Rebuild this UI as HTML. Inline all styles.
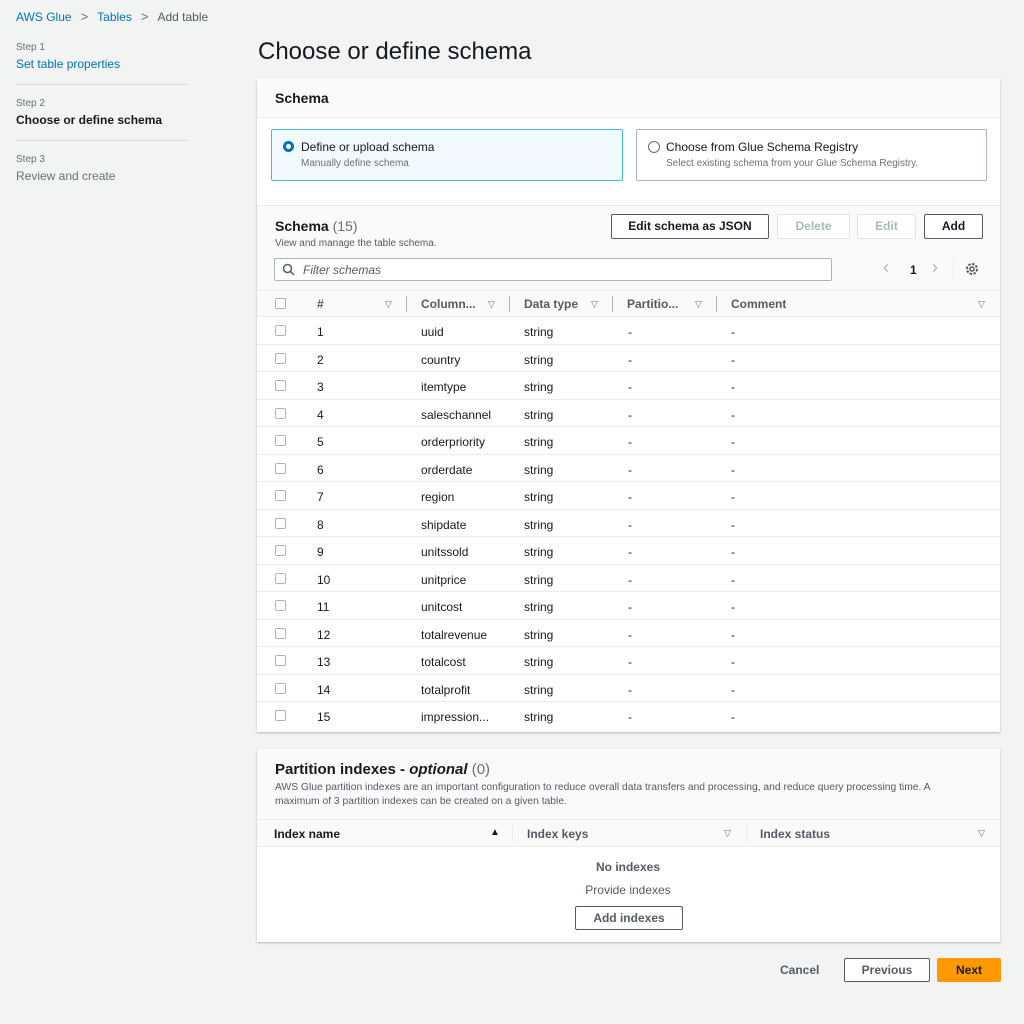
<!DOCTYPE html>
<html><head><meta charset="utf-8"><style>
*{box-sizing:border-box;margin:0;padding:0}
body{width:1024px;height:1024px;background:#f2f3f3;font-family:"Liberation Sans",sans-serif;color:#16191f;position:relative;overflow:hidden;font-size:12px}
.a{position:absolute;white-space:nowrap}
.link{color:#0073bb}
.b{font-weight:bold}
.panel{position:absolute;background:#fff;box-shadow:0 1px 2px rgba(0,0,0,.25)}
.btn{position:absolute;border:1px solid #545b64;border-radius:2px;background:#fff;font-weight:bold;font-size:12px;text-align:center;color:#545b64}
.dis{border-color:#e0e2e4;color:#aab7b8}
.cb{position:absolute;width:11px;height:11px;border:1px solid #aab7b8;border-radius:2px;background:#fff}
.row{position:absolute;left:257px;width:743px;height:27.5px;border-bottom:1px solid #eaeded}
.row span{position:absolute;top:8px;font-size:12px}
.tri{position:absolute;font-size:9px;color:#687078}
.sep{position:absolute;width:1px;background:#aab7b8}
</style></head><body>
<div class="a" style="left:16px;top:9px;font-size:12px"><span class="link">AWS Glue</span><span style="color:#687078;margin:0 9px;font-size:13px">&gt;</span><span class="link">Tables</span><span style="color:#687078;margin:0 9px;font-size:13px">&gt;</span><span style="color:#545b64">Add table</span></div>

<div class="a" style="left:16px;top:42px;font-size:10px;color:#687078">Step 1</div>
<div class="a link" style="left:16px;top:57px;font-size:12px">Set table properties</div>
<div class="a" style="left:16px;top:84px;width:172px;height:1px;background:#d5dbdb"></div>
<div class="a" style="left:16px;top:98px;font-size:10px;color:#687078">Step 2</div>
<div class="a b" style="left:16px;top:113px;font-size:12px">Choose or define schema</div>
<div class="a" style="left:16px;top:140px;width:172px;height:1px;background:#d5dbdb"></div>
<div class="a" style="left:16px;top:154px;font-size:10px;color:#687078">Step 3</div>
<div class="a" style="left:16px;top:169px;font-size:12px;color:#687078">Review and create</div>

<div class="a" style="left:258px;top:38px;font-size:24px">Choose or define schema</div>

<div class="panel" style="left:257px;top:78px;width:743px;height:654px"></div>
<div class="a" style="left:257px;top:78px;width:743px;height:40px;background:#fafafa;border-bottom:1px solid #eaeded"></div>
<div class="a b" style="left:275px;top:90px;font-size:14px">Schema</div>

<div class="a" style="left:271px;top:129px;width:352px;height:52px;border:1px solid #44b9d6;background:#f1faff;border-radius:2px"></div>
<div class="a" style="left:283px;top:141px;width:11px;height:11px;border-radius:50%;border:3px solid #0073bb;background:#fff"></div>
<div class="a" style="left:301px;top:140px;font-size:12px">Define or upload schema</div>
<div class="a" style="left:301px;top:158px;font-size:10px;color:#687078">Manually define schema</div>
<div class="a" style="left:636px;top:129px;width:351px;height:52px;border:1px solid #aab7b8;border-radius:2px"></div>
<div class="a" style="left:648px;top:141px;width:12px;height:12px;border-radius:50%;border:1px solid #687078"></div>
<div class="a" style="left:666px;top:140px;font-size:12px">Choose from Glue Schema Registry</div>
<div class="a" style="left:666px;top:158px;font-size:10px;color:#687078">Select existing schema from your Glue Schema Registry.</div>

<div class="a" style="left:257px;top:205px;width:743px;height:86px;background:#fafafa;border-top:1px solid #eaeded;border-bottom:1px solid #eaeded"></div>
<div class="a" style="left:275px;top:218px;font-size:14px"><span class="b">Schema</span> <span style="color:#687078">(15)</span></div>
<div class="a" style="left:275px;top:238px;font-size:10px;color:#545b64">View and manage the table schema.</div>
<div class="btn" style="left:611px;top:214px;width:158px;height:25px;line-height:23px;color:#16191f">Edit schema as JSON</div>
<div class="btn dis" style="left:777px;top:214px;width:73px;height:25px;line-height:23px">Delete</div>
<div class="btn dis" style="left:857px;top:214px;width:59px;height:25px;line-height:23px">Edit</div>
<div class="btn" style="left:924px;top:214px;width:59px;height:25px;line-height:23px;color:#16191f">Add</div>
<div class="a" style="left:274px;top:258px;width:558px;height:23px;border:1px solid #aab7b8;border-radius:2px;background:#fff"></div>
<svg class="a" style="left:282px;top:263px" width="13" height="13"><circle cx="5.5" cy="5.5" r="4" fill="none" stroke="#545b64" stroke-width="1.5"/><path d="M8.5 8.5L12 12" stroke="#545b64" stroke-width="1.5"/></svg>
<div class="a" style="left:303px;top:263px;font-size:12px;font-style:italic;color:#545b64">Filter schemas</div>
<div class="a" style="left:883px;top:257px;font-size:18px;color:#aab7b8">&lsaquo;</div>
<div class="a b" style="left:910px;top:263px;font-size:12px">1</div>
<div class="a" style="left:932px;top:257px;font-size:18px;color:#aab7b8">&rsaquo;</div>
<div class="sep" style="left:953px;top:258px;height:22px;background:#eaeded"></div>
<svg class="a" style="left:965px;top:262px" width="14" height="14"><circle cx="7" cy="7" r="5" fill="none" stroke="#545b64" stroke-width="2" stroke-dasharray="2.5 1.4"/><circle cx="7" cy="7" r="2" fill="none" stroke="#545b64" stroke-width="1.5"/></svg>

<div class="a" style="left:257px;top:291px;width:743px;height:26px;background:#fafafa;border-bottom:1px solid #eaeded"></div>
<div class="cb" style="left:275px;top:298px"></div>
<div class="a b" style="left:317px;top:297px;color:#545b64">#</div><div class="tri" style="left:385px;top:299px">&#9661;</div><div class="sep" style="left:406px;top:296px;height:16px"></div>
<div class="a b" style="left:421px;top:297px;color:#545b64">Column...</div><div class="tri" style="left:488px;top:299px">&#9661;</div><div class="sep" style="left:509px;top:296px;height:16px"></div>
<div class="a b" style="left:524px;top:297px;color:#545b64">Data type</div><div class="tri" style="left:591px;top:299px">&#9661;</div><div class="sep" style="left:612px;top:296px;height:16px"></div>
<div class="a b" style="left:627px;top:297px;color:#545b64">Partitio...</div><div class="tri" style="left:695px;top:299px">&#9661;</div><div class="sep" style="left:716px;top:296px;height:16px"></div>
<div class="a b" style="left:731px;top:297px;color:#545b64">Comment</div><div class="tri" style="left:978px;top:299px">&#9661;</div>

<div class="row" style="top:317px"><div class="cb" style="left:18px;top:8px"></div><span style="left:60px">1</span><span style="left:164px">uuid</span><span style="left:267px">string</span><span style="left:371px">-</span><span style="left:474px">-</span></div>
<div class="row" style="top:344.5px"><div class="cb" style="left:18px;top:8px"></div><span style="left:60px">2</span><span style="left:164px">country</span><span style="left:267px">string</span><span style="left:371px">-</span><span style="left:474px">-</span></div>
<div class="row" style="top:372px"><div class="cb" style="left:18px;top:8px"></div><span style="left:60px">3</span><span style="left:164px">itemtype</span><span style="left:267px">string</span><span style="left:371px">-</span><span style="left:474px">-</span></div>
<div class="row" style="top:399.5px"><div class="cb" style="left:18px;top:8px"></div><span style="left:60px">4</span><span style="left:164px">saleschannel</span><span style="left:267px">string</span><span style="left:371px">-</span><span style="left:474px">-</span></div>
<div class="row" style="top:427px"><div class="cb" style="left:18px;top:8px"></div><span style="left:60px">5</span><span style="left:164px">orderpriority</span><span style="left:267px">string</span><span style="left:371px">-</span><span style="left:474px">-</span></div>
<div class="row" style="top:454.5px"><div class="cb" style="left:18px;top:8px"></div><span style="left:60px">6</span><span style="left:164px">orderdate</span><span style="left:267px">string</span><span style="left:371px">-</span><span style="left:474px">-</span></div>
<div class="row" style="top:482px"><div class="cb" style="left:18px;top:8px"></div><span style="left:60px">7</span><span style="left:164px">region</span><span style="left:267px">string</span><span style="left:371px">-</span><span style="left:474px">-</span></div>
<div class="row" style="top:509.5px"><div class="cb" style="left:18px;top:8px"></div><span style="left:60px">8</span><span style="left:164px">shipdate</span><span style="left:267px">string</span><span style="left:371px">-</span><span style="left:474px">-</span></div>
<div class="row" style="top:537px"><div class="cb" style="left:18px;top:8px"></div><span style="left:60px">9</span><span style="left:164px">unitssold</span><span style="left:267px">string</span><span style="left:371px">-</span><span style="left:474px">-</span></div>
<div class="row" style="top:564.5px"><div class="cb" style="left:18px;top:8px"></div><span style="left:60px">10</span><span style="left:164px">unitprice</span><span style="left:267px">string</span><span style="left:371px">-</span><span style="left:474px">-</span></div>
<div class="row" style="top:592px"><div class="cb" style="left:18px;top:8px"></div><span style="left:60px">11</span><span style="left:164px">unitcost</span><span style="left:267px">string</span><span style="left:371px">-</span><span style="left:474px">-</span></div>
<div class="row" style="top:619.5px"><div class="cb" style="left:18px;top:8px"></div><span style="left:60px">12</span><span style="left:164px">totalrevenue</span><span style="left:267px">string</span><span style="left:371px">-</span><span style="left:474px">-</span></div>
<div class="row" style="top:647px"><div class="cb" style="left:18px;top:8px"></div><span style="left:60px">13</span><span style="left:164px">totalcost</span><span style="left:267px">string</span><span style="left:371px">-</span><span style="left:474px">-</span></div>
<div class="row" style="top:674.5px"><div class="cb" style="left:18px;top:8px"></div><span style="left:60px">14</span><span style="left:164px">totalprofit</span><span style="left:267px">string</span><span style="left:371px">-</span><span style="left:474px">-</span></div>
<div class="row" style="top:702px;border-bottom:none"><div class="cb" style="left:18px;top:8px"></div><span style="left:60px">15</span><span style="left:164px">impression...</span><span style="left:267px">string</span><span style="left:371px">-</span><span style="left:474px">-</span></div>

<div class="panel" style="left:257px;top:749px;width:743px;height:193px"></div>
<div class="a" style="left:257px;top:749px;width:743px;height:71px;background:#fafafa;border-bottom:1px solid #eaeded"></div>
<div class="a" style="left:275px;top:761px;font-size:15px"><span class="b">Partition indexes - <i>optional</i></span> <span style="color:#687078">(0)</span></div>
<div class="a" style="left:275px;top:781px;font-size:10.3px;color:#545b64;line-height:14px">AWS Glue partition indexes are an important configuration to reduce overall data transfers and processing, and reduce query processing time. A<br>maximum of 3 partition indexes can be created on a given table.</div>
<div class="a" style="left:257px;top:820px;width:743px;height:27px;background:#fafafa;border-bottom:1px solid #eaeded"></div>
<div class="a b" style="left:274px;top:827px">Index name</div><div class="a" style="left:490px;top:827px;font-size:10px">&#9650;</div><div class="sep" style="left:512px;top:825px;height:17px;background:#eaeded"></div>
<div class="a b" style="left:527px;top:827px;color:#545b64">Index keys</div><div class="tri" style="left:724px;top:828px">&#9661;</div><div class="sep" style="left:746px;top:825px;height:17px;background:#eaeded"></div>
<div class="a b" style="left:760px;top:827px;color:#545b64">Index status</div><div class="tri" style="left:978px;top:828px">&#9661;</div>
<div class="a b" style="left:578px;top:860px;width:100px;text-align:center;color:#545b64">No indexes</div>
<div class="a" style="left:578px;top:883px;width:100px;text-align:center;color:#545b64">Provide indexes</div>
<div class="btn" style="left:575px;top:906px;width:108px;height:24px;line-height:22px">Add indexes</div>

<div class="a b" style="left:780px;top:963px;color:#545b64">Cancel</div>
<div class="btn" style="left:844px;top:958px;width:86px;height:24px;line-height:22px">Previous</div>
<div class="btn" style="left:937px;top:958px;width:64px;height:24px;line-height:22px;background:#ff9900;border-color:#ff9900;color:#16191f">Next</div>
</body></html>
